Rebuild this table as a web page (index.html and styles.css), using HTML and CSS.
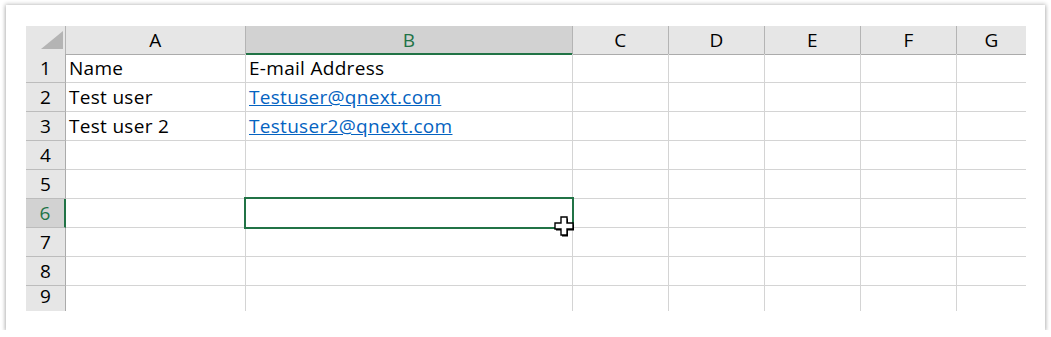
FILE: index.html
```html
<!DOCTYPE html>
<html>
<head>
    <title>Sheet1</title>
    <link rel="stylesheet" href="styles.css">
</head>
<body>
    <div class="sheet">
        <div class="grid">
            <div class="row head">
                <div class="corner"><span class="tri"></span></div>
                <div class="col">A</div>
                <div class="col sel">B</div>
                <div class="col">C</div>
                <div class="col">D</div>
                <div class="col">E</div>
                <div class="col">F</div>
                <div class="col last">G</div>
            </div>

            <div class="row">
                <div class="num">1</div>
                <div class="cell">Name</div>
                <div class="cell">E-mail Address</div>
                <div class="cell"></div><div class="cell"></div><div class="cell"></div><div class="cell"></div><div class="cell last"></div>
            </div>
            <div class="row">
                <div class="num">2</div>
                <div class="cell">Test user</div>
                <div class="cell"><a href="mailto:Testuser@qnext.com">Testuser@qnext.com</a></div>
                <div class="cell"></div><div class="cell"></div><div class="cell"></div><div class="cell"></div><div class="cell last"></div>
            </div>
            <div class="row">
                <div class="num">3</div>
                <div class="cell">Test user 2</div>
                <div class="cell"><a href="mailto:Testuser2@qnext.com">Testuser2@qnext.com</a></div>
                <div class="cell"></div><div class="cell"></div><div class="cell"></div><div class="cell"></div><div class="cell last"></div>
            </div>
            <div class="row">
                <div class="num">4</div>
                <div class="cell"></div><div class="cell"></div><div class="cell"></div><div class="cell"></div><div class="cell"></div><div class="cell"></div><div class="cell last"></div>
            </div>
            <div class="row">
                <div class="num">5</div>
                <div class="cell"></div><div class="cell"></div><div class="cell"></div><div class="cell"></div><div class="cell"></div><div class="cell"></div><div class="cell last"></div>
            </div>
            <div class="row">
                <div class="num sel">6</div>
                <div class="cell"></div>
                <div class="cell active">
                    <!-- fat white cross pointer -->
                    <svg class="pointer" width="22" height="22" viewBox="0 0 22 22">
                        <polygon points="8,2.5 14,2.5 14,8.5 20,8.5 20,14.5 14,14.5 14,20.5 8,20.5 8,14.5 2,14.5 2,8.5 8,8.5" fill="#000"/>
                        <polygon points="7,1 13,1 13,7 19,7 19,13 13,13 13,19 7,19 7,13 1,13 1,7 7,7" fill="#fff" stroke="#000" stroke-width="1.4"/>
                    </svg>
                </div>
                <div class="cell"></div><div class="cell"></div><div class="cell"></div><div class="cell"></div><div class="cell last"></div>
            </div>
            <div class="row">
                <div class="num">7</div>
                <div class="cell"></div><div class="cell"></div><div class="cell"></div><div class="cell"></div><div class="cell"></div><div class="cell"></div><div class="cell last"></div>
            </div>
            <div class="row">
                <div class="num">8</div>
                <div class="cell"></div><div class="cell"></div><div class="cell"></div><div class="cell"></div><div class="cell"></div><div class="cell"></div><div class="cell last"></div>
            </div>
            <div class="row cut">
                <div class="num">9</div>
                <div class="cell"></div><div class="cell"></div><div class="cell"></div><div class="cell"></div><div class="cell"></div><div class="cell"></div><div class="cell last"></div>
            </div>
        </div>
    </div>
</body>
</html>
```

FILE: styles.css
```css
body { margin: 0; padding: 5px 0 0 6px; background: #fff; font-family: "Open Sans", "Liberation Sans", sans-serif; font-size: 19px; letter-spacing: 0.3px; color: #000; }
.sheet { width: 1039px; height: 325px; box-sizing: border-box; padding: 21px 19px 0 20px; background: #fff; box-shadow: 0 0 4px 1px rgba(0, 0, 0, 0.22), 0 2px 4px rgba(0, 0, 0, 0.15); }

.row { display: grid; grid-template-columns: 40px 180px 327px 96px 96px 96px 96px 69px; height: 29px; }
.row.head { height: 28px; }
.row.cut { height: 25px; }
.row.cut > div { border-bottom: none; }

/* column headers */
.corner, .col { background: #e6e6e6; border-right: 1px solid #b4b4b4; border-bottom: 1px solid #ababab; box-sizing: border-box; }
.col { text-align: center; line-height: 25px; padding-top: 2px; }
.col.sel { background: #d2d2d2; color: #217346; border-bottom: 2px solid #217346; }
.col.last { border-right: none; }
.corner { display: flex; justify-content: flex-end; align-items: flex-end; padding: 0 2px 5px 0; }
.tri { width: 22px; height: 18px; background: #b4b4b4; clip-path: polygon(100% 0, 100% 100%, 0 100%); }

/* row headers */
.num { background: #e6e6e6; border-right: 1px solid #ababab; border-bottom: 1px solid #bcbcbc; box-sizing: border-box; text-align: center; line-height: 27px; padding-top: 1px; }
.num.sel { background: #d2d2d2; color: #217346; border-right: 2px solid #217346; }
/* last row is only partly on screen */
.row.cut .num { line-height: 20px; padding-top: 0; }

/* cells */
.cell { border-right: 1px solid #d4d4d4; border-bottom: 1px solid #d4d4d4; box-sizing: border-box; padding: 1px 0 0 3px; line-height: 27px; white-space: nowrap; }
.cell.last { border-right: none; }
.cell a { color: #0563c1; text-decoration: underline; }

.cell.active { position: relative; }
.cell.active::after { content: ""; position: absolute; inset: -2px; border: 2px solid #217346; z-index: 1; }
.pointer { position: absolute; left: 308px; top: 17px; z-index: 2; }
```
